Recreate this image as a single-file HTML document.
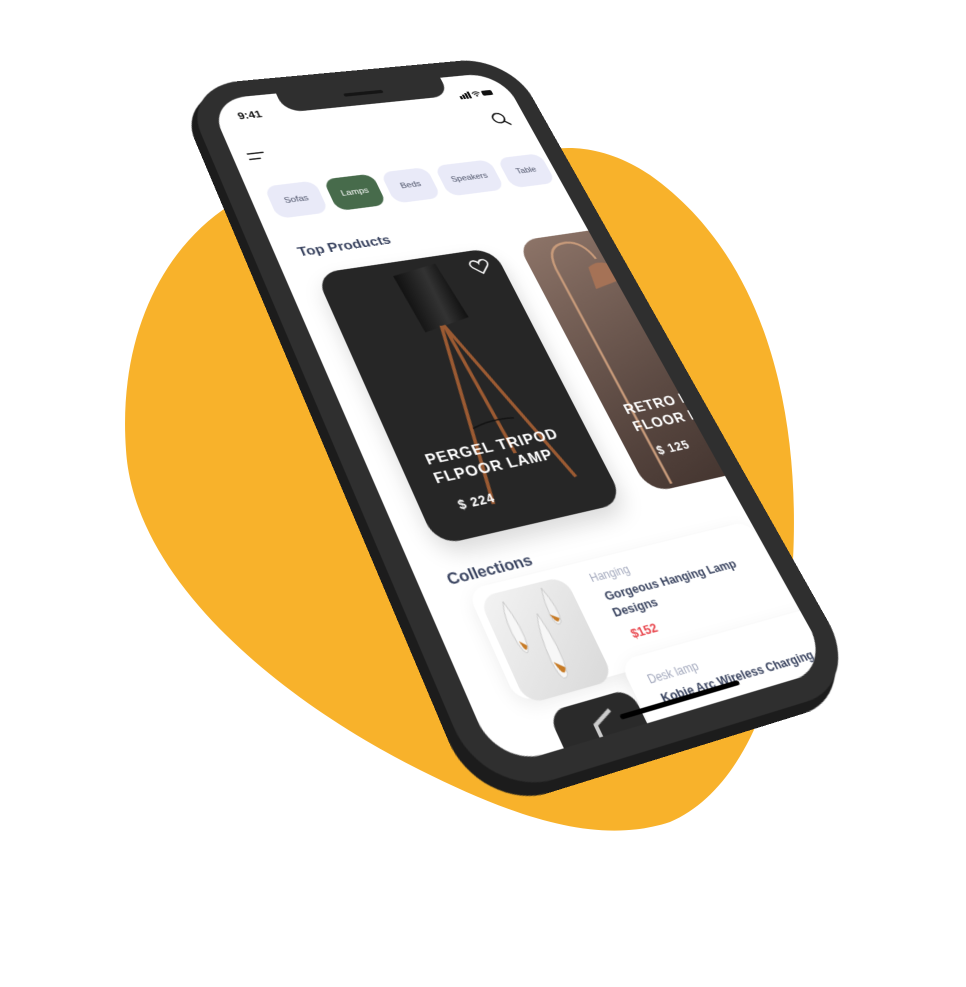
<!DOCTYPE html>
<html><head><meta charset="utf-8"><style>
html,body{margin:0;padding:0;background:#fff;width:966px;height:987px;overflow:hidden;font-family:"Liberation Sans",sans-serif}
.t{position:absolute;left:0;top:0;transform-origin:0 0;transform:matrix3d(0.89261,-0.058267,0,0.00022789,0.22793,0.62339,0,-0.00025947,0,0,1,0,208,100,0,1)}
.body{position:absolute;left:-24px;top:-24px;width:423px;height:860px;border-radius:70px;background:#2f2f2f}
.body2{position:absolute;left:-34px;top:-14px;width:423px;height:860px;border-radius:70px;background:#1c1c1c}
.screen{position:absolute;left:0;top:0;width:375px;height:812px;border-radius:46px;background:#fff;overflow:hidden}
.notch{position:absolute;left:82px;top:-2px;width:211px;height:32px;background:#2f2f2f;border-radius:0 0 22px 22px}
.chip{position:absolute;top:132px;height:46px;border-radius:14px;background:#e9eaf8;color:#4a5066;font-size:11px;line-height:46px;text-align:center}
.card{position:absolute;border-radius:26px;overflow:hidden}
.h{position:absolute;color:#3a4460;font-weight:bold;font-size:17px}
</style></head><body>
<svg width="966" height="987" style="position:absolute;left:0;top:0">
<path d="M230 205 C160 250 118 340 126 450 C134 580 280 700 420 770 C520 820 600 845 670 822 C745 790 785 680 793 560 C800 420 770 260 650 175 C590 135 540 148 520 160 Z" fill="#F8B22B"/>
</svg>
<div class="t">
 <div class="body2"></div>
 <div class="body"></div>
 <div class="screen">
  <div class="notch"><div style="position:absolute;left:80px;top:12px;width:50px;height:5px;border-radius:3px;background:#151515"></div></div>
  <div style="position:absolute;left:26px;top:20px;font-size:14px;font-weight:bold;color:#111">9:41</div>
  <div style="position:absolute;left:305px;top:24px;width:46px;height:12px">
   <svg width="46" height="12"><rect x="0" y="7" width="3" height="5" fill="#111"/><rect x="4" y="5" width="3" height="7" fill="#111"/><rect x="8" y="3" width="3" height="9" fill="#111"/><rect x="12" y="1" width="3" height="11" fill="#111"/><path d="M18 5 Q23 0 28 5 M20 7 Q23 4 26 7" stroke="#111" stroke-width="1.6" fill="none"/><circle cx="23" cy="9" r="1.3" fill="#111"/><rect x="31" y="2" width="14" height="8" rx="2" fill="#111"/></svg>
  </div>
  <svg style="position:absolute;left:330px;top:62px" width="26" height="26"><circle cx="10" cy="10" r="7.5" stroke="#111" stroke-width="2" fill="none"/><path d="M15.5 15.5 L22 22" stroke="#111" stroke-width="2.2"/></svg>
  <svg style="position:absolute;left:16px;top:80px" width="24" height="18"><path d="M2 4 H20 M2 12 H14" stroke="#222" stroke-width="2.2" stroke-linecap="round"/></svg>
  <div class="chip" style="left:20px;width:60px">Sofas</div>
  <div class="chip" style="left:90px;width:60px;background:#476b4b;color:#fff">Lamps</div>
  <div class="chip" style="left:160px;width:58px">Beds</div>
  <div class="chip" style="left:228px;width:72px">Speakers</div>
  <div class="chip" style="left:310px;width:58px">Table</div>
  <div class="chip" style="left:378px;width:58px"></div>
  <div class="h" style="left:26px;top:216px">Top Products</div>
  <div class="card" style="left:34px;top:256px;width:214px;height:335px;background:#262626;box-shadow:0 12px 24px rgba(0,0,0,.15)">
   <svg width="214" height="335" style="position:absolute;left:0;top:0">
    <defs><linearGradient id="sh" x1="0" x2="1"><stop offset="0" stop-color="#111"/><stop offset=".6" stop-color="#333"/><stop offset="1" stop-color="#111"/></linearGradient></defs>
    <path d="M84 18 L138 10 L146 85 L90 95 Z" fill="url(#sh)"/>
    <path d="M111 90 L76 305 M114 90 L176 295 M114 90 L124 255" stroke="#9b5a32" stroke-width="4" fill="none"/>
    <path d="M92 218 Q116 211 141 215" stroke="#111" stroke-width="1.5" fill="none"/>
   </svg>
   <div style="position:absolute;left:28px;top:232px;color:#fff;font-weight:bold;font-size:17px;letter-spacing:1px;line-height:22px;white-space:nowrap">PERGEL TRIPOD<br>FLPOOR LAMP</div>
   <div style="position:absolute;left:40px;top:290px;color:#fff;font-weight:bold;font-size:14px;letter-spacing:1px">$ 224</div>
   <svg style="position:absolute;left:176px;top:12px" width="24" height="22"><path d="M12 20 L3 11 C-1 6 3 1 7.5 2 C10 2.5 11.5 4.5 12 6 C12.5 4.5 14 2.5 16.5 2 C21 1 25 6 21 11 Z" stroke="#fff" stroke-width="1.8" fill="none"/></svg>
  </div>
  <div class="card" style="left:280px;top:252px;width:205px;height:335px;background:linear-gradient(160deg,#8d7468,#5b4942 60%,#3e302b)">
   <svg width="205" height="335" style="position:absolute;left:0;top:0">
    <path d="M30 330 L30 45 Q32 10 60 12 Q80 14 85 40" stroke="#c79a7a" stroke-width="3" fill="none"/>
    <path d="M70 50 Q95 35 115 70 L65 80 Z" fill="#a57256"/>
   </svg>
   <div style="position:absolute;left:22px;top:225px;color:#fff;font-weight:bold;font-size:17px;letter-spacing:1px;line-height:22px;white-space:nowrap">RETRO INDUSTRIAL<br>FLOOR LAMP</div>
   <div style="position:absolute;left:34px;top:282px;color:#fff;font-weight:bold;font-size:14px;letter-spacing:1px">$ 125</div>
  </div>
  <div class="h" style="left:30px;top:618px">Collections</div>
  <div style="position:absolute;left:44px;top:642px;width:330px;height:118px;border-radius:18px;background:#fff;box-shadow:0 6px 20px rgba(0,0,0,.08)"></div>
  <div style="position:absolute;left:52px;top:652px;width:95px;height:112px;border-radius:18px;background:linear-gradient(135deg,#f3f3f3,#d9d9d9)">
   <svg width="95" height="112"><path d="M22 10 Q30 40 26 60 Q22 72 18 55 Q14 30 22 10Z" fill="#f7f7f7" stroke="#ccc"/><path d="M20 52 Q22 68 26 58Z" fill="#c77b26"/><path d="M50 30 Q58 70 52 95 Q44 105 42 80 Q42 50 50 30Z" fill="#f7f7f7" stroke="#ccc"/><path d="M44 80 Q48 100 53 88Z" fill="#c77b26"/><path d="M66 6 Q74 30 70 44 Q64 50 62 36 Q62 20 66 6Z" fill="#f2f2f2" stroke="#ccc"/><path d="M62 34 Q66 48 70 40Z" fill="#c77b26"/></svg>
  </div>
  <div style="position:absolute;left:172px;top:654px;color:#a3a9bd;font-size:12px">Hanging</div>
  <div style="position:absolute;left:178px;top:674px;color:#3a4460;font-size:13px;line-height:18px;font-weight:bold;width:190px">Gorgeous Hanging Lamp Designs</div>
  <div style="position:absolute;left:186px;top:718px;color:#e8454c;font-size:13px;font-weight:bold">$152</div>
  <div style="position:absolute;left:160px;top:748px;width:240px;height:110px;border-radius:18px;background:#fff;box-shadow:0 6px 20px rgba(0,0,0,.08)"></div>
  <div style="position:absolute;left:68px;top:776px;width:90px;height:100px;border-radius:18px;background:#2a2a2a"><svg width="90" height="60"><path d="M40 60 L40 24 L60 14" stroke="#ccc" stroke-width="4" fill="none"/></svg></div>
  <div style="position:absolute;left:180px;top:766px;color:#a3a9bd;font-size:12px">Desk lamp</div>
  <div style="position:absolute;left:184px;top:786px;color:#3a4460;font-size:13px;font-weight:bold;white-space:nowrap">Kobie Arc Wireless Charging</div>
  <div style="position:absolute;left:135px;top:797px;width:135px;height:5px;border-radius:3px;background:#000"></div>
 </div>
</div>
</body></html>
